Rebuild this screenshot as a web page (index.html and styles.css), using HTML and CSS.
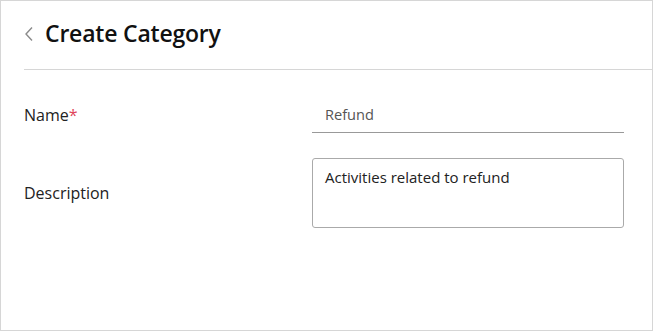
FILE: index.html
```html
<!DOCTYPE html>
<html>
<head>
<meta charset="utf-8">
<link rel="stylesheet" href="styles.css">
</head>
<body>
<div class="frame">
  <header class="header">
    <svg class="back" width="10" height="16" viewBox="0 0 10 16"><path d="M8 1.5 L2 8 L8 14.5" fill="none" stroke="#8a8a8a" stroke-width="1.4"/></svg>
    <h1 class="title">Create Category</h1>
  </header>
  <form class="form">
    <div class="row row-name">
      <label class="label">Name<span class="req">*</span></label>
      <div class="field"><div class="input">Refund</div></div>
    </div>
    <div class="row row-desc">
      <label class="label">Description</label>
      <div class="field"><div class="textarea">Activities related to refund</div></div>
    </div>
  </form>
</div>
</body>
</html>
```
FILE: styles.css
```css
* { box-sizing: border-box; }
html, body { margin: 0; padding: 0; background: #fff; }
body { font-family: "Open Sans", "Liberation Sans", sans-serif; color: #1a1a1a; }
.frame {
  width: 653px; height: 331px;
  border: 1px solid #d6d6d6;
  background: #fff;
  overflow: hidden;
}
.header {
  display: flex; align-items: center;
  margin-left: 23px;
  height: 69px;
  border-bottom: 1px solid #d6d6d6;
  gap: 11px;
}
.back { display: block; margin-top: -3px; }
.title {
  margin: 0; font-size: 23px; font-weight: 600; color: #111;
  letter-spacing: -0.2px;
  margin-top: -5px;
}
.form { padding: 0 28px 0 23px; }
.row { display: flex; }
.label { width: 288px; font-size: 16px; color: #222; }
.req { color: #e0445a; }
.field { flex: 1; }
.row-name { height: 63px; align-items: flex-end; }
.row-name .label { padding-bottom: 7px; }
.input {
  height: 38px; padding: 9px 13px 0; font-size: 14.6px; color: #555;
  border-bottom: 1px solid #999;
}
.row-desc { margin-top: 25px; }
.row-desc .label { padding-top: 24px; }
.textarea {
  height: 70px; border: 1px solid #aaa; border-radius: 3px;
  padding: 8px 12px; font-size: 15px; color: #222;
}
```
